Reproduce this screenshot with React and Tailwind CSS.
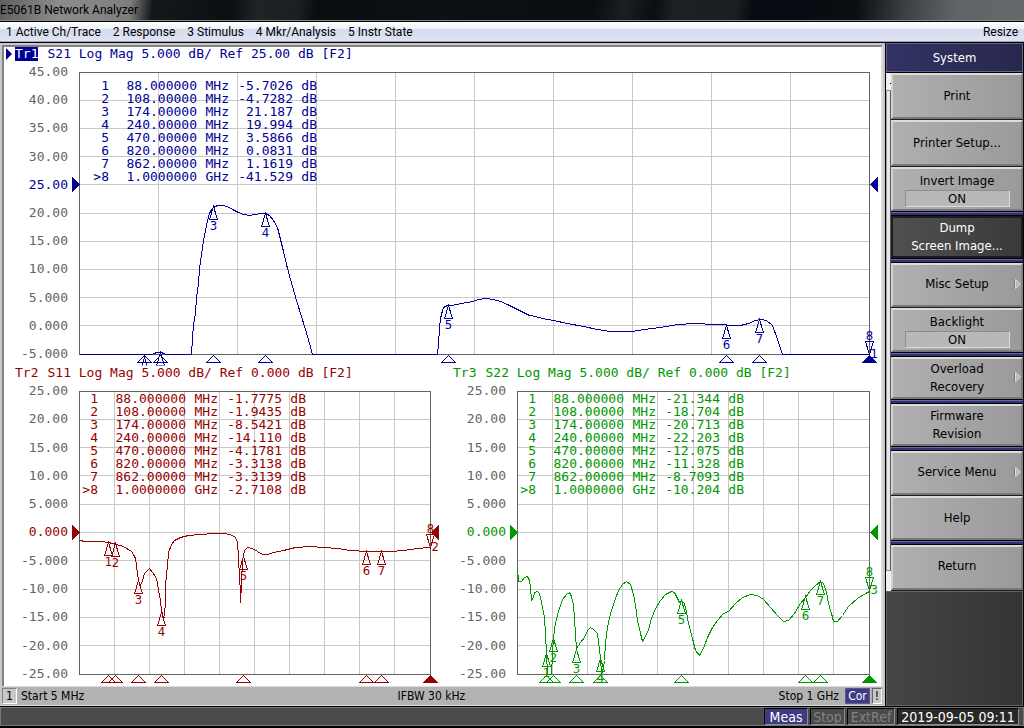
import clsx from 'clsx';

const MENU = ['1 Active Ch/Trace', '2 Response', '3 Stimulus', '4 Mkr/Analysis', '5 Instr State'];

const FREQS = [
  { mhz: 88, text: '88.000000', unit: 'MHz' },
  { mhz: 108, text: '108.00000', unit: 'MHz' },
  { mhz: 174, text: '174.00000', unit: 'MHz' },
  { mhz: 240, text: '240.00000', unit: 'MHz' },
  { mhz: 470, text: '470.00000', unit: 'MHz' },
  { mhz: 820, text: '820.00000', unit: 'MHz' },
  { mhz: 862, text: '862.00000', unit: 'MHz' },
  { mhz: 1000, text: '1.0000000', unit: 'GHz' },
];

// trace paths are in plot units, origin at the top left of the graticule
const TRACES = [
  {
    id: 1,
    name: 'Tr1',
    label: 'S21 Log Mag 5.000 dB/ Ref 25.00 dB [F2]',
    active: true,
    color: '#000096',
    text: 'text-[#000096]',
    table: 'left-[23px] top-[14px]',
    top: 45,
    ref: 25,
    width: 790,
    height: 282,
    box: [811, 301],
    values: ['-5.7026', '-4.7282', '21.187', '19.994', '3.5866', '0.0831', '1.1619', '-41.529'],
    points:
      '0,282 73,282 74,281 78,280 81,280 85,281 86,282 112,282 113,265 114,253 116,240 117,225 119,211 120,196 122,182 124,168 126,158 128,148 130,141 132,137 134,135 138,133 143,133 148,134 153,137 159,140 164,142 170,143 176,142 181,141 186,141 190,143 194,148 198,155 201,167 204,179 208,196 213,214 217,228 222,244 226,257 230,271 233,282 358,282 359,271 360,256 361,246 363,238 364,235 368,233 372,233 377,232 382,231 388,230 393,229 399,227 406,226 414,227 421,229 428,232 438,237 444,240 450,243 456,244 463,246 474,248 488,251 504,254 518,257 531,259 553,259 564,257 581,255 598,252 616,251 634,252 661,253 669,251 676,248 681,247 687,248 693,253 698,267 703,282 790,282',
  },
  {
    id: 2,
    name: 'Tr2',
    label: 'S11 Log Mag 5.000 dB/ Ref 0.000 dB [F2]',
    color: '#960000',
    text: 'text-[#960000]',
    table: 'left-[12px] top-[8px]',
    top: 25,
    ref: 0,
    width: 351,
    height: 283,
    box: [372, 302],
    values: ['-1.7775', '-1.9435', '-8.5421', '-14.110', '-4.1781', '-3.3138', '-3.3139', '-2.7108'],
    points:
      '0,149 6,150 21,150 29,151 37,153 44,155 52,160 54,163 56,167 57,174 58,182 59,189 61,194 63,189 65,182 68,179 70,177 73,181 76,185 78,191 79,199 81,209 82,219 84,227 85,225 86,209 86,194 88,174 89,161 92,153 95,149 101,146 109,144 121,143 134,142 144,142 151,143 156,146 158,151 159,166 160,186 161,201 161,211 162,192 163,169 165,159 168,156 173,157 178,160 183,163 188,163 194,161 204,159 216,156 231,155 244,156 258,157 271,159 288,160 311,160 324,159 338,157 349,156 351,156',
  },
  {
    id: 3,
    name: 'Tr3',
    label: 'S22 Log Mag 5.000 dB/ Ref 0.000 dB [F2]',
    color: '#009600',
    text: 'text-[#009600]',
    table: 'left-[12px] top-[8px]',
    top: 25,
    ref: 0,
    width: 352,
    height: 283,
    box: [373, 302],
    values: ['-21.344', '-18.704', '-20.713', '-22.203', '-12.075', '-11.328', '-8.7093', '-10.204'],
    points:
      '0,177 1,190 4,190 7,186 10,185 12,189 13,196 14,209 16,206 17,201 20,200 22,202 24,211 27,226 28,242 29,262 30,283 34,283 35,262 36,246 38,231 41,220 45,208 49,203 52,201 54,205 56,213 57,227 58,244 59,257 63,251 67,246 70,239 73,236 76,238 80,242 81,251 83,266 84,283 86,276 87,269 88,251 90,236 93,222 97,210 101,199 105,193 109,190 113,193 116,203 118,214 120,229 123,242 125,250 128,245 131,238 134,227 138,217 143,209 148,203 154,200 157,201 160,207 162,211 164,209 167,212 169,221 171,232 175,247 178,259 182,264 186,257 190,246 195,236 200,229 206,222 211,220 218,212 225,206 233,203 240,204 246,208 253,216 260,224 266,230 271,229 277,222 283,212 288,206 293,199 298,194 303,190 306,192 309,201 311,212 314,222 316,230 320,230 325,224 331,215 340,207 348,202 352,200',
  },
];

const SOFTKEYS = [
  { lines: ['Print'], size: 'h-[46px]' },
  { lines: ['Printer Setup...'], size: 'h-[46px]' },
  { lines: ['Invert Image'], value: 'ON', size: 'h-[44px]', end: true },
  { lines: ['Dump', 'Screen Image...'], size: 'h-[42px]', end: true, selected: true },
  { lines: ['Misc Setup'], size: 'h-[44px] pb-[3px]', more: true },
  { lines: ['Backlight'], value: 'ON', size: 'h-[44px]', end: true },
  { lines: ['Overload', 'Recovery'], size: 'h-[42px]', end: true, more: true },
  { lines: ['Firmware', 'Revision'], size: 'h-[42px]', end: true },
  { lines: ['Service Menu'], size: 'h-[44px] pb-[3px]', more: true },
  { lines: ['Help'], size: 'h-[44px]', end: true },
  { lines: ['Return'], size: 'h-[45px] pb-[3px]' },
];

const STEPS = [0, 1, 2, 3, 4, 5, 6, 7, 8, 9, 10];

function axisText(v) {
  return Math.abs(v) >= 10 ? v.toFixed(2) : v.toFixed(3);
}

function Marker({ n, x, y, color, labelled }) {
  return (
    <g>
      <path d={`M${x} ${y}L${x + 4} ${y + 13}H${x - 4}Z`} fill="none" stroke={color} />
      {labelled && <text x={x} y={y + 23} textAnchor="middle" fill={color}>{n}</text>}
    </g>
  );
}

function Plot({ trace }) {
  const { id, width, height, box, top, ref: refLevel, color, values, points } = trace;
  const toX = (mhz) => Math.floor(((mhz - 5) / 995) * width);
  const toY = (db) => Math.floor(((top - db) / 50) * height);
  const refY = Math.floor(((top - refLevel) / 50) * height);
  const endY = Math.min(toY(Number(values[7])), height);

  return (
    <svg
      viewBox={`-9.5 -7.5 ${box[0]} ${box[1]}`}
      className="block h-auto w-full font-['DejaVu_Sans_Condensed','DejaVu_Sans',sans-serif] text-[13px]"
      shapeRendering="crispEdges"
      role="img"
      aria-label={trace.label}
    >
      <defs>
        <clipPath id={`clip${id}`}>
          <rect x="-9" y="-8" width={box[0]} height={height + 19} />
        </clipPath>
      </defs>
      <g stroke="#c8c8c8">
        {STEPS.slice(1, 10).map((i) => (
          <path key={i} d={`M${Math.floor((width * i) / 10)} 0V${height}M0 ${Math.floor((height * i) / 10)}H${width}`} />
        ))}
      </g>
      <rect width={width} height={height} fill="none" stroke="#646464" />
      <polyline points={points} fill="none" stroke={color} />

      {/* markers below the graticule keep their symbol but lose the number */}
      <g clipPath={`url(#clip${id})`}>
        {FREQS.slice(0, 7).map((f, i) => {
          const y = toY(Number(values[i]));
          return <Marker key={f.mhz} n={i + 1} x={toX(f.mhz)} y={y} color={color} labelled={y < height - 10} />;
        })}
      </g>
      <path d={`M${width} ${endY}l-4 -13h8Z`} fill="none" stroke={color} />
      <text x={width} y={endY - 15} textAnchor="middle" fill={color}>8</text>
      <text x={width + 1} y={endY + 3} fill={color}>{id}</text>

      {FREQS.map((f, i) => (
        <path
          key={f.mhz}
          d={`M${toX(f.mhz)} ${height + 1}l7 7h-14Z`}
          fill={i === 7 ? color : 'none'}
          stroke={color}
        />
      ))}
      <path d={`M0 ${refY}l-8 -8v16ZM${width} ${refY}l8 -8v16Z`} fill={color} />
    </svg>
  );
}

function MarkerTable({ trace }) {
  return (
    <table className={clsx('absolute whitespace-pre leading-[13px]', trace.table, trace.text)}>
      <tbody>
        {FREQS.map((f, i) => (
          <tr key={f.mhz}>
            <td className="w-4 p-0 text-right">{i === 7 ? '>8' : i + 1}</td>
            <td className="w-[88px] p-0 text-right">{f.text}</td>
            <td className="w-8 p-0 text-right">{f.unit}</td>
            <td className="w-16 p-0 text-right">{trace.values[i]}</td>
            <td className="w-6 p-0 text-right">dB</td>
          </tr>
        ))}
      </tbody>
    </table>
  );
}

function TracePanel({ trace }) {
  return (
    <section className="min-w-0 font-['DejaVu_Sans_Mono','Liberation_Mono',monospace] text-[13px]">
      <h2 className={clsx('flex h-[18px] items-start gap-[9px] whitespace-pre pl-[11px] leading-[14px]', trace.text)}>
        {trace.active ? (
          <span className="-ml-[9px] flex items-center gap-[3px]">
            <svg width="6" height="12" viewBox="0 0 6 12">
              <path d="M0 0l6 6-6 6Z" fill={trace.color} />
            </svg>
            <span className="bg-[#000096] text-white">{trace.name}</span>
          </span>
        ) : (
          <span>{trace.name}</span>
        )}
        <span>{trace.label}</span>
      </h2>
      <div className="flex items-start">
        <ul className={clsx('flex w-[66px] shrink-0 flex-col justify-between pr-[2px] text-right leading-[14px] text-[#646464]', trace.active ? 'h-[296px]' : 'h-[297px]')}>
          {STEPS.map((i) => {
            const v = trace.top - i * 5;
            return <li key={i} className={clsx(v === trace.ref && trace.text)}>{axisText(v)}</li>;
          })}
        </ul>
        <div className="relative min-w-0 flex-1">
          <Plot trace={trace} />
          <MarkerTable trace={trace} />
        </div>
      </div>
    </section>
  );
}

function Softkey({ item }) {
  return (
    <>
      <button
        type="button"
        className={clsx(
          'relative flex w-full shrink-0 flex-col items-center justify-center border-2 leading-[18px]',
          item.size,
          item.selected
            ? 'border-[#1c1c1c] bg-linear-to-r from-[#505050] to-[#3a3a3a] text-white'
            : 'border-t-[#dcdcdc] border-r-[#828282] border-b-[#787878] border-l-[#d2d2d2] bg-linear-to-r from-[#b0b0b0] to-[#9a9a9a] text-black'
        )}
      >
        {item.lines.map((line) => <span key={line}>{line}</span>)}
        {item.value && (
          <span className="h-[17px] w-[105px] border border-t-[#8c8c8c] border-r-[#dcdcdc] border-b-[#dcdcdc] border-l-[#8c8c8c] bg-[#b8b8b8] leading-[15px]">
            {item.value}
          </span>
        )}
        {item.more && (
          <svg className="absolute right-0 top-1/2 -mt-[6px]" width="7" height="10" viewBox="0 0 7 10">
            <path d="M.5 9.500V.5" stroke="#787878" />
            <path d="M1.500.5l5 4.500-5 4.500Z" fill="#b9b9b9" stroke="#dcdcdc" />
          </svg>
        )}
      </button>
      {item.end ? (
        <div className="h-[5px] shrink-0 border-y border-y-black bg-[#32326e]">
          <div className="h-px bg-[#6464b4]" />
        </div>
      ) : (
        <div className="h-px shrink-0 bg-[#1e1e1e]" />
      )}
    </>
  );
}

export default function App() {
  const [tr1, tr2, tr3] = TRACES;

  return (
    <div className="flex min-h-screen flex-col bg-black font-['DejaVu_Sans_Condensed','DejaVu_Sans',sans-serif] text-[12px] text-black">
      <header className="flex h-[21px] items-center border-b border-[#8c8c8c] bg-[radial-gradient(ellipse_at_38px_22px,#c8d2dc_0,#c8d2dc00_20px),linear-gradient(97deg,#5f5f5f_0,#8c8c8c_60px,#7d7d7d_130px,#14181c_152px,#0b0e12_230px,#1e2327_255px,#1c2024_295px,#0a0d12_315px,#0d1115_440px,#0a0d12_590px,#1a1f23_620px,#0a0e13_650px,#1c2125_670px,#1a1f23_730px,#070b11_750px,#0a0d12_850px,#3c4144_900px,#5f6467_950px,#64696b_1024px)] font-[Roboto,'Open_Sans',sans-serif]">
        <h1>E5061B Network Analyzer</h1>
      </header>

      <nav className="mt-px flex h-5 items-center gap-3 border-b border-[#a0a4b8] bg-[linear-gradient(#ffffff_0,#eef1f9_35%,#d6dcee_40%,#dfe4f4_100%)] px-[6px] font-[Roboto,'Open_Sans',sans-serif]">
        {MENU.map((m) => <button key={m} type="button">{m}</button>)}
        <button type="button" className="ml-auto">Resize</button>
      </nav>

      <div className="mt-px flex flex-1">
        <main className="flex min-w-0 flex-1 flex-col border-r border-black">
          <div className="flex flex-1 flex-col border-2 border-b-0 border-[#c8c8c8]">
            <div className="flex-1 border-2 border-b-0 border-t-[#828282] border-r-[#dcdcdc] border-l-[#828282] bg-white">
              <TracePanel trace={tr1} />
              <div className="grid grid-cols-[438fr_439fr]">
                <TracePanel trace={tr2} />
                <TracePanel trace={tr3} />
              </div>
            </div>
            <footer className="flex h-5 shrink-0 items-center justify-between border-y border-[#dcdcdc] bg-[#b2b2b2]">
              <div className="flex items-center gap-1">
                <span className="h-4 w-[15px] border border-t-[#828282] border-r-white border-b-white border-l-[#828282] bg-[#c8c8c8] text-center leading-[14px]">1</span>
                <span>Start 5 MHz</span>
              </div>
              <span>IFBW 30 kHz</span>
              <div className="flex items-center gap-[2px] pr-px">
                <span className="mr-1">Stop 1 GHz</span>
                <span className="h-4 w-[25px] border border-[#5a5a8c] bg-[#3c3c82] text-center leading-[14px] text-white">Cor</span>
                <span className="h-4 w-[10px] border border-t-[#646464] border-r-white border-b-white border-l-[#646464] bg-[#c8c8c8] text-center leading-[14px]">!</span>
              </div>
            </footer>
          </div>
        </main>

        <aside className="flex w-[138px] shrink-0 flex-col pr-px text-[13px]">
          <h2 className="h-[29px] border border-[#646482] bg-linear-to-r from-[#323264] to-[#28284e] text-center leading-[27px] text-white">System</h2>
          <div className="mt-px flex">
            <div className="flex w-[5px] flex-col bg-[#f0f0f0]">
              <span className="ml-auto mt-[10px] h-px w-px bg-black" />
              <span className="mt-[6px] flex-1 border border-t-[#8c8c8c] border-r-[#5a5a5a] border-b-[#8c8c8c] border-l-[#a0a0a0] bg-[#e6e6e6]" />
              <span className="h-5" />
            </div>
            <div className="min-w-0 flex-1">
              {SOFTKEYS.map((k) => <Softkey key={k.lines[0]} item={k} />)}
            </div>
          </div>
          <div className="flex-1 border border-[#646464] bg-linear-to-r from-[#464646] to-[#343434]" />
        </aside>
      </div>

      <footer className="mt-px mb-[2px] flex h-[19px] items-center justify-end gap-[2px] border border-[#787878] bg-[#4b4b4b] pr-1 text-[14px] leading-[16px]">
        <span className="h-[17px] w-[44px] border border-t-black border-r-[#8c8c8c] border-b-[#8c8c8c] border-l-black bg-[#3c3c82] text-center text-white">Meas</span>
        <span className="h-[17px] w-[35px] border border-t-black border-r-[#8c8c8c] border-b-[#8c8c8c] border-l-black text-center text-[#828282]">Stop</span>
        <span className="h-[17px] w-[48px] border border-t-black border-r-[#8c8c8c] border-b-[#8c8c8c] border-l-black text-center text-[#828282]">ExtRef</span>
        <time className="h-[17px] w-[122px] whitespace-nowrap border border-t-black border-r-[#8c8c8c] border-b-[#8c8c8c] border-l-black bg-[#282828] text-center text-white">2019-09-05 09:11</time>
      </footer>
    </div>
  );
}
